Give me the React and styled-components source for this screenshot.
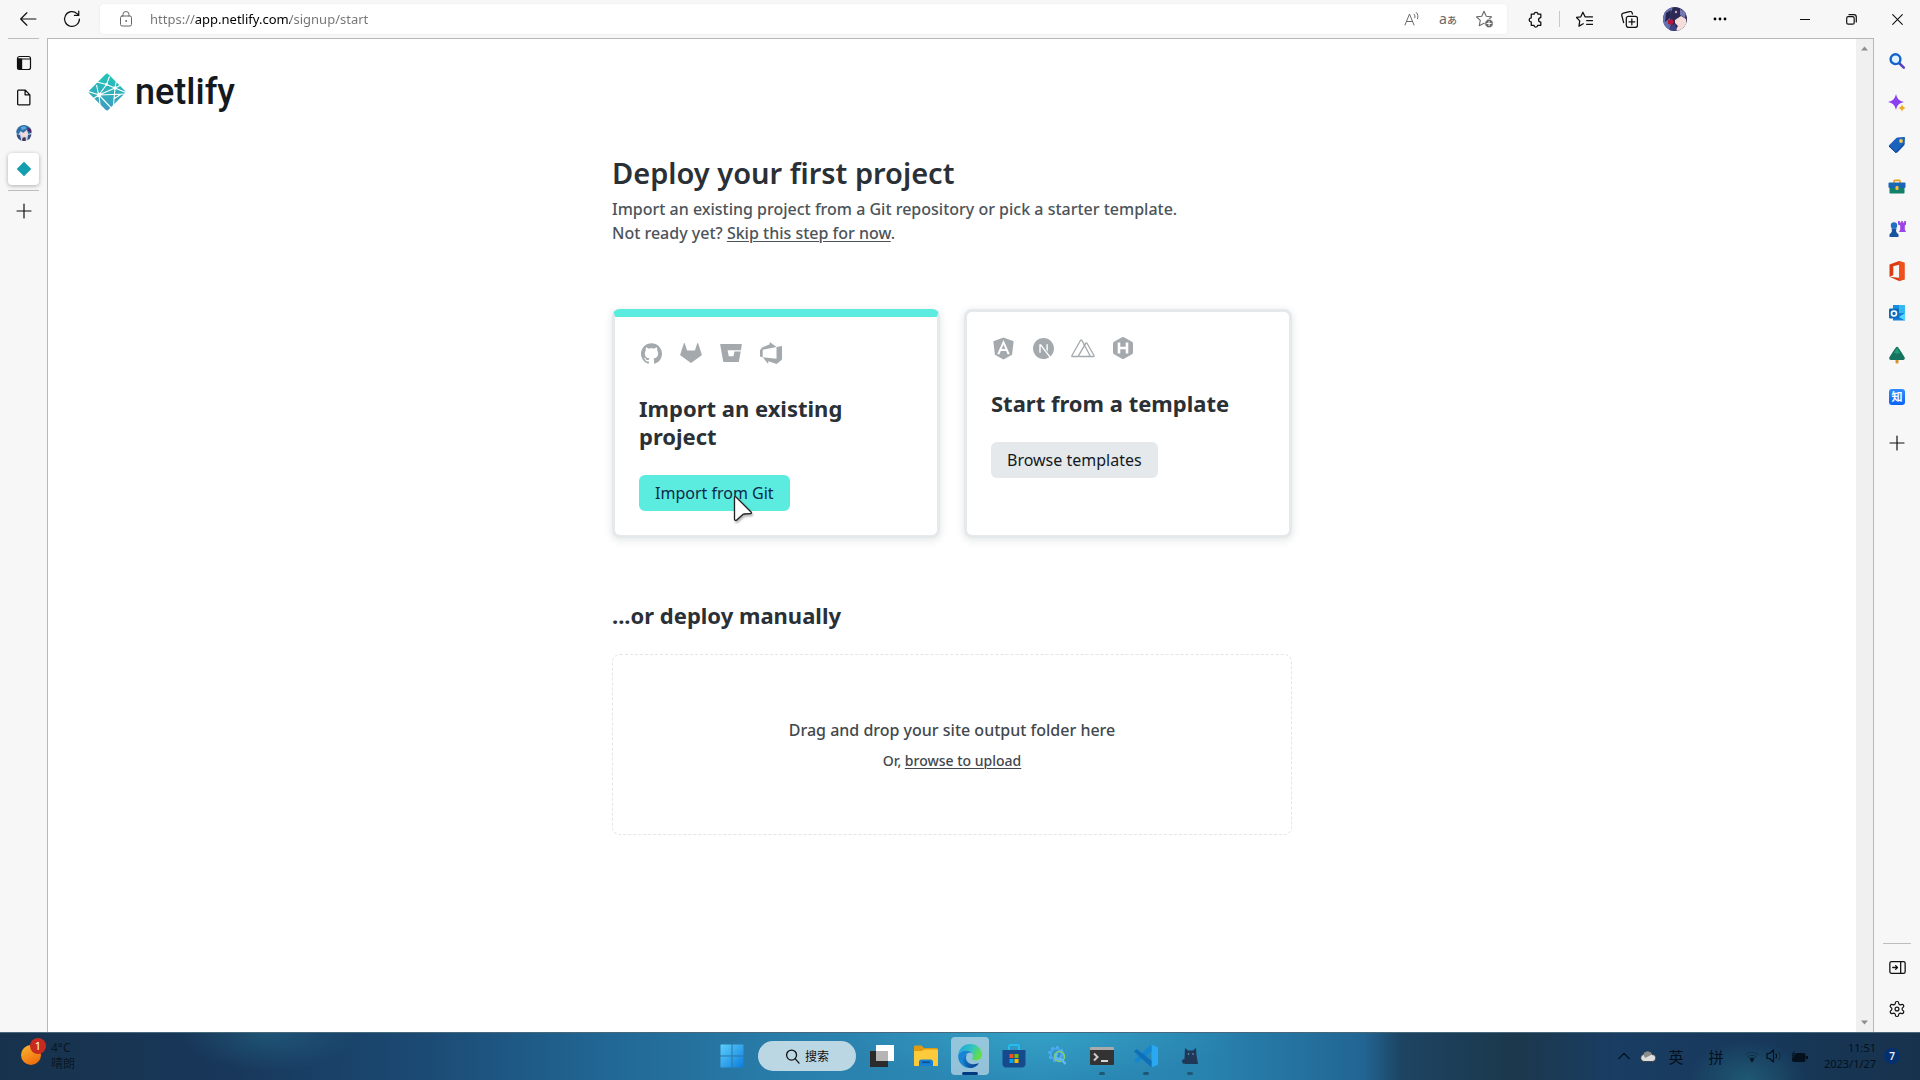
import React from 'react';
import styled, { createGlobalStyle, css } from 'styled-components';
import { SiGithub, SiNextdotjs } from 'react-icons/si';
import { FaAngular } from 'react-icons/fa';

const GlobalStyle = createGlobalStyle`
  *, *::before, *::after { box-sizing: border-box; }
  body { margin: 0; background: #f7f7f7; overflow: hidden; }
  body, button, input { font-family: "Noto Sans", "Noto Sans CJK SC", sans-serif; }
  h1, h2, p { margin: 0; }
  svg { display: block; flex: none; }
`;

/* ---------- window frame ---------- */

const Screen = styled.div`
  display: grid;
  grid-template-rows: 38px 1fr 48px;
  min-height: 100vh;
`;

const PlainButton = styled.button`
  display: flex;
  align-items: center;
  justify-content: center;
  padding: 0;
  border: 0;
  background: none;
  color: #111;
`;

const Toolbar = styled.header`
  display: flex;
  align-items: center;
  padding-left: 10px;
  background: #f7f7f7;
`;

const ToolButton = styled(PlainButton)`
  width: ${(p) => p.$width || 45}px;
  height: 36px;
`;

const NavGroup = styled.div`
  display: flex;
  width: 90px;
`;

const AddressBar = styled.div`
  flex: 1;
  display: flex;
  align-items: center;
  height: 30px;
  margin-right: 6px;
  padding: 0 5px 0 18px;
  border-radius: 4px;
  background: #fff;
  box-shadow: 0 0 2px rgba(0, 0, 0, 0.08);
`;

const AddressInput = styled.input`
  flex: 1;
  min-width: 0;
  height: 24px;
  margin-left: 16px;
  padding: 0;
  border: 0;
  outline: 0;
  font-size: 13px;
  background: linear-gradient(90deg, #737373 45px, #000 45px 140px, #737373 140px);
  -webkit-background-clip: text;
  background-clip: text;
  -webkit-text-fill-color: transparent;
`;

const AddressAction = styled(PlainButton)`
  width: 36px;
  height: 24px;
  color: #6a6a6a;
`;

const Translate = styled.span`
  font-size: 14px;
  line-height: 16px;
  small { font-size: 10px; font-weight: 500; }
`;

const ToolDivider = styled.span`
  width: 1px;
  height: 16px;
  margin: 0 2px 0 1px;
  background: #c8c8c8;
`;

const WindowControls = styled.div`
  display: flex;
  margin-left: 40px;
`;

const Body = styled.div`
  display: flex;
  min-height: 0;
`;

const TabRail = styled.nav`
  display: flex;
  flex-direction: column;
  align-items: center;
  width: 47px;
  background: #f7f7f7;
`;

const RailDivider = styled.span`
  width: ${(p) => p.$width}px;
  height: 1px;
  background: #bdbdbd;
`;

const TabList = styled.div`
  display: flex;
  flex-direction: column;
  gap: 4px;
  margin-bottom: 5px;
`;

const Tab = styled(PlainButton)`
  width: 31px;
  height: 32px;
  border-radius: 4px;
  ${(p) => p.$active && css`
    background: #fff;
    box-shadow: 0 1px 4px rgba(0, 0, 0, 0.3);
  `}
`;

const PanelToggle = styled(Tab)`
  margin: 8px 0 2px;
`;

const NewTab = styled(Tab)`
  margin-top: 4px;
`;

const Viewport = styled.main`
  flex: 1;
  min-width: 0;
  border: 1px solid #b8b8b8;
  border-width: 1px 0 0 1px;
  background: #fff;
`;

const ScrollTrack = styled.div`
  display: flex;
  flex-direction: column;
  align-items: center;
  justify-content: space-between;
  width: 18px;
  padding: 7px 0;
  border: 1px solid #b8b8b8;
  border-width: 1px 1px 0 0;
  background: #f0f0f0;
`;

const SideRail = styled.aside`
  display: flex;
  flex-direction: column;
  align-items: center;
  width: 46px;
  padding: 2px 0;
  background: #f7f7f7;
`;

const SideButton = styled(PlainButton)`
  width: 42px;
  height: 42px;
`;

const SideAdd = styled(SideButton)`
  margin-top: 4px;
`;

const SideFooter = styled.div`
  display: flex;
  flex-direction: column;
  align-items: center;
  margin-top: auto;
  ${RailDivider} { margin-bottom: 2px; }
`;

const ZhihuBadge = styled.span`
  width: 16px;
  border-radius: 3px;
  background: linear-gradient(#2f8dff, #0a62f5);
  color: #fff;
  font-size: 11px;
  font-weight: 700;
  line-height: 16px;
  text-align: center;
`;

/* ---------- page ---------- */

const SiteHeader = styled.div`
  padding: 32px 40px 0;
`;

const Brand = styled.a`
  display: inline-flex;
  align-items: center;
  gap: 9px;
  height: 42px;
  color: #14191d;
  font: 500 36px/42px Roboto, sans-serif;
  text-decoration: none;
  vertical-align: top;
`;

const Column = styled.div`
  width: 100%;
  max-width: 680px;
  margin: 42px auto 0;
`;

const Title = styled.h1`
  color: #2a3036;
  font-size: 29px;
  font-weight: 600;
  line-height: 36px;
`;

const Intro = styled.p`
  margin-top: 6px;
  color: #4c5459;
  font-size: 16px;
  font-weight: 500;
  line-height: 24px;
`;

const TextLink = styled.a`
  color: inherit;
  text-decoration: underline;
  text-decoration-thickness: 1px;
  text-underline-offset: 2px;
`;

const Cards = styled.div`
  display: grid;
  grid-template-columns: 1fr 1fr;
  gap: 24px;
  margin-top: 64px;
`;

const Card = styled.section`
  padding: 24px;
  border: 3px solid #e5e9ec;
  ${(p) => p.$featured && css`border-top: 8px solid #5cebdf;`}
  border-radius: 8px;
  background: #fff;
  box-shadow: 0 2px 8px rgba(14, 30, 37, 0.12);
`;

const LogoRow = styled.div`
  display: flex;
  gap: 16px;
  color: #a3a9ac;
`;

const LogoBox = styled.span`
  display: flex;
  align-items: center;
  justify-content: center;
  width: 24px;
  height: 24px;
`;

const Subtitle = styled.h2`
  color: #2a3036;
  font-size: 22px;
  font-weight: 700;
  line-height: 28px;
`;

const CardTitle = styled(Subtitle)`
  margin: 29px 0 25px;
`;

const ActionButton = styled.button`
  position: relative;
  height: 36px;
  padding: 0 16px;
  border: 0;
  border-radius: 6px;
  background: ${(p) => (p.$primary ? '#5cebdf' : '#e5e9ec')};
  color: ${(p) => (p.$primary ? '#0c2a4a' : '#14191d')};
  font-size: 16px;
  font-weight: 400;
  line-height: 24px;
`;

const Pointer = styled.svg`
  position: absolute;
  left: 94px;
  top: 20px;
  z-index: 1;
  filter: drop-shadow(1px 2px 1px rgba(0, 0, 0, 0.3));
`;

const Manual = styled.section`
  margin-top: 63px;
`;

const DropZone = styled.div`
  margin-top: 25px;
  padding: 63px 24px;
  border: 1px dashed #e3e5e7;
  border-radius: 8px;
  color: #42484d;
  text-align: center;
`;

const DropText = styled.p`
  font-size: 16px;
  font-weight: 500;
  line-height: 24px;
`;

const DropHint = styled.p`
  margin-top: 9px;
  font-size: 14px;
  font-weight: 500;
  line-height: 20px;
`;

/* ---------- taskbar ---------- */

const Taskbar = styled.footer`
  display: grid;
  grid-template-columns: 1fr auto 1fr;
  align-items: center;
  padding-left: 2px;
  box-shadow: inset 0 1px #48697c;
  background:
    radial-gradient(ellipse 60px 40px at 91% 100%, rgba(36, 110, 130, 0.6), transparent),
    radial-gradient(ellipse 90px 40px at 14% 0%, rgba(36, 110, 140, 0.5), transparent),
    radial-gradient(ellipse 200px 50px at 54% 0%, rgba(60, 180, 210, 0.5), transparent),
    linear-gradient(90deg, #17324c 0%, #18375a 12%, #1b4a74 22%, #226896 32%, #2a80ac 42%,
      #2c8cb8 54%, #2882ae 63%, #226594 71%, #1d4462 73%, #1b384c 79%, #193d63 84%, #17385a 92%, #17324c 100%);
`;

const Weather = styled(PlainButton)`
  justify-self: start;
  gap: 5px;
  margin-left: 18px;
  color: #0b1722;
  font-size: 12px;
  line-height: 16px;
  text-align: left;
`;

const Stack = styled.span`
  display: flex;
  flex-direction: column;
`;

const Dock = styled.div`
  display: flex;
  align-items: center;
`;

const DockItem = styled(PlainButton)`
  position: relative;
  width: 38px;
  height: 38px;
  margin: 0 3px;
  border-radius: 4px;
  background: ${(p) => (p.$active ? 'rgba(216, 230, 238, 0.6)' : 'none')};
  ${(p) => (p.$active || p.$running) && css`
    &::after {
      content: '';
      position: absolute;
      bottom: 0;
      width: ${p.$active ? 16 : 6}px;
      height: 3px;
      border-radius: 2px;
      background: ${p.$active ? '#003a80' : '#1d5876'};
    }
  `}
`;

const SearchPill = styled(PlainButton)`
  gap: 5px;
  width: 98px;
  height: 30px;
  margin: 0 4px;
  border-radius: 15px;
  background: #bcd7e4;
  font-size: 12px;
`;

const Tray = styled.div`
  display: flex;
  align-items: center;
  justify-self: end;
  margin-right: 20px;
`;

const TrayButton = styled(PlainButton)`
  width: ${(p) => p.$width || 24}px;
  height: 40px;
  color: #04101c;
  font-size: 15px;
`;

const Clock = styled(TrayButton)`
  margin-left: 9px;
  font-size: 11px;
  line-height: 16px;
  text-align: right;
`;

const NoticeCount = styled.span`
  width: 16px;
  margin-left: 7px;
  border-radius: 50%;
  background: #043070;
  color: #e8f0fa;
  font-size: 10px;
  font-weight: 600;
  line-height: 16px;
  text-align: center;
`;

/* ---------- icons ---------- */

const Line = ({ size = 16, w = 1.2, children, box = 16 }) => (
  <svg width={size} height={size} viewBox={`0 0 ${box} ${box}`} fill="none" stroke="currentColor"
    strokeWidth={w} strokeLinecap="round" strokeLinejoin="round">{children}</svg>
);

const STAR = 'M8 1.2l2 4.3 4.7.6-3.4 3.2.9 4.7L8 11.8 3.8 14l.9-4.7L1.3 6.1 6 5.5z';

const NetlifyMark = () => (
  <svg width="38" height="38" viewBox="0 0 38 38">
    <defs>
      <linearGradient id="nl" x1="0" y1="0" x2="1" y2="1">
        <stop offset="0" stopColor="#20c6b7" /><stop offset="1" stopColor="#3e9bc0" />
      </linearGradient>
    </defs>
    <rect x="5.500" y="5.500" width="27" height="27" rx="2" transform="rotate(45 19 19)" fill="url(#nl)" />
    <g stroke="#fff" strokeWidth="1.100" fill="none">
      <path d="M9 9l9.500 2.500M18.500 11.500l3-8M18.500 11.500L27 15M18.500 11.500L11 22M27 15l1.500-8M27 15l12 5M11 22L-1 18M11 22L3 27M11 22l16-7M11 22l28-1M11 22l15 16M11 22l1 10M27 15l-2 23M25.500 26l8-5M10.500 21L8.500 12M27 15l6-3" />
    </g>
    <circle cx="11" cy="22" r="2.200" fill="#fff" />
    <circle cx="27" cy="15" r="1.700" fill="#fff" />
    <circle cx="18.500" cy="11.500" r="1.400" fill="#fff" />
  </svg>
);

const Gitlab = () => (
  <svg width="24" height="24" viewBox="0 0 24 24" fill="currentColor">
    <path d="M12 22L1.600 14.400a1 1 0 0 1-.3-1.100L2.500 9.600 4.900 2.200c.15-.4.7-.4.8 0L8.100 9.500h7.800l2.400-7.300c.15-.4.7-.4.8 0l2.400 7.400 1.200 3.700a1 1 0 0 1-.3 1.100z" />
  </svg>
);

const Bitbucket = () => (
  <svg width="24" height="24" viewBox="0 0 24 24" fill="currentColor">
    <path d="M1.700 3h20.600c.4 0 .6.3.5.7L21.900 9.200H8.600l1.200 6h4.700l.9-4.700h6.300L19.900 20.400c-.1.4-.3.6-.7.6H4.900c-.4 0-.7-.3-.7-.6L1.200 3.700c-.1-.4.1-.7.5-.7z" />
  </svg>
);

const AzureDevops = () => (
  <svg width="22" height="22" viewBox="0 0 24 24" fill="currentColor">
    <path d="M0 8.877L2.247 5.910l8.405-3.416V.022l7.370 5.393L2.966 8.338v8.225L0 15.707zm24-4.450v14.651l-5.753 4.900-9.303-3.057v3.056l-5.978-7.416 15.057 1.798V5.415z" />
  </svg>
);

const Nuxt = () => (
  <svg width="24" height="24" viewBox="0 0 24 24" fill="none" stroke="currentColor" strokeWidth="1.300" strokeLinejoin="round">
    <path d="M7.500 20.500H1.300c-.5 0-.7-.5-.4-1L9.600 4.200c.3-.5.8-.5 1.100 0l3.200 5.600" />
    <path d="M8.500 20.500c-.9 0-1.100-.6-.8-1.200L14.900 7.200c.3-.5.8-.5 1.100 0l7 12.300c.3.500.1 1-.5 1z" />
    <path d="M12.600 7.800l6 10.900c.5 1 .2 1.800-.9 1.800" />
  </svg>
);

const Hugo = () => (
  <svg width="24" height="24" viewBox="0 0 24 24">
    <path d="M11 1.300a2 2 0 0 1 2 0l8 4.500c.6.400 1 1 1 1.700v9c0 .7-.4 1.300-1 1.700l-8 4.500a2 2 0 0 1-2 0l-8-4.500c-.6-.4-1-1-1-1.700v-9c0-.7.4-1.300 1-1.700z" fill="currentColor" />
    <path d="M8 6.500v11M16 6.500v11M8 12h8" stroke="#fff" strokeWidth="2.600" />
  </svg>
);

const Gear = () => (
  <Line size={18} box={24} w={1.6}>
    <path d="M12.220 2h-.440a2 2 0 0 0-2 2v.180a2 2 0 0 1-1 1.730l-.430.250a2 2 0 0 1-2 0l-.150-.080a2 2 0 0 0-2.730.730l-.220.380a2 2 0 0 0 .730 2.730l.150.100a2 2 0 0 1 1 1.720v.510a2 2 0 0 1-1 1.740l-.150.090a2 2 0 0 0-.730 2.730l.220.380a2 2 0 0 0 2.730.730l.150-.080a2 2 0 0 1 2 0l.430.250a2 2 0 0 1 1 1.730V20a2 2 0 0 0 2 2h.440a2 2 0 0 0 2-2v-.180a2 2 0 0 1 1-1.730l.430-.250a2 2 0 0 1 2 0l.150.080a2 2 0 0 0 2.730-.730l.220-.390a2 2 0 0 0-.730-2.730l-.150-.080a2 2 0 0 1-1-1.740v-.500a2 2 0 0 1 1-1.740l.150-.090a2 2 0 0 0 .730-2.730l-.220-.380a2 2 0 0 0-2.730-.730l-.150.080a2 2 0 0 1-2 0l-.430-.250a2 2 0 0 1-1-1.730V4a2 2 0 0 0-2-2z" />
    <circle cx="12" cy="12" r="2.600" />
  </Line>
);

const Plus = () => <Line w={1.200}><path d="M8 1v14M1 8h14" /></Line>;

const SideSearch = () => (
  <svg width="18" height="18" viewBox="0 0 18 18" fill="none">
    <path d="M10.800 10.800l5 4.800" stroke="#5b3fc4" strokeWidth="2.600" strokeLinecap="round" />
    <circle cx="7.500" cy="7.200" r="4.900" fill="#dff2ff" stroke="#1463c8" strokeWidth="2.400" />
  </svg>
);
const Sparkle = () => (
  <svg width="18" height="18" viewBox="0 0 18 18">
    <path d="M8 0c1.300 5 3 6.700 8 8-5 1.300-6.700 3-8 8-1.300-5-3-6.700-8-8 5-1.300 6.700-3 8-8z" fill="#8b3df0" />
    <path d="M14 10c.6 2.600 1.400 3.400 4 4-2.600.6-3.400 1.400-4 4-.6-2.600-1.400-3.400-4-4 2.600-.6 3.400-1.400 4-4z" fill="#f2a81d" />
  </svg>
);
const Tag = () => (
  <svg width="18" height="18" viewBox="0 0 18 18">
    <path d="M9.500 1.500L16 1c.7 0 1 .3 1 1l-.4 6.300c0 .5-.2.800-.5 1.100l-6.700 7c-.6.600-1.300.6-1.900 0L1.300 11c-.6-.6-.6-1.400 0-2l7-7c.3-.3.700-.5 1.200-.5z" fill="#1b62bd" />
    <path d="M1 10l6.800 6.600 8.500-9" stroke="#10438c" fill="none" />
    <circle cx="13" cy="5" r="1.900" fill="#f7c948" />
  </svg>
);
const Toolbox = () => (
  <svg width="18" height="18" viewBox="0 0 18 18">
    <path d="M6 5V3.200c0-.5.300-.8.800-.8h4.400c.5 0 .8.300.8.800V5" fill="none" stroke="#e4a11b" strokeWidth="1.600" />
    <rect x=".5" y="4.500" width="17" height="5.500" rx="1" fill="#1767b5" />
    <path d="M1.500 10h15v4.500c0 .6-.4 1-1 1h-13c-.6 0-1-.4-1-1z" fill="#12806a" />
    <rect x="7.500" y="8" width="3" height="4" rx="1" fill="#f5c037" />
  </svg>
);
const Chess = () => (
  <svg width="18" height="18" viewBox="0 0 18 18">
    <path d="M10 1h1.800v1.500h1.400V1h1.600v1.500h1.400V1H18v3.500l-1.200 1v4L18 12h-7l1.200-2.500v-4L10 4.500z" fill="#9b45e8" />
    <circle cx="6" cy="5.500" r="3.200" fill="#2070c8" />
    <path d="M3.500 8.500h5v1.200H8c0 2 .6 3.300 2.500 4.500V17h-9v-2.800c1.900-1.200 2.500-2.500 2.500-4.500h-.5z" fill="#17559f" />
  </svg>
);
const Office = () => (
  <svg width="18" height="20" viewBox="0 0 18 20">
    <path d="M11 0L1.500 3.600v12.200l3.800-1.500V5.200L11 3.800v13L1.500 15.800 11 20l5.500-1.600V1.700z" fill="#dc3c12" />
    <path d="M11 0l5.500 1.700v16.700L11 20z" fill="#f0501c" />
  </svg>
);
const Outlook = () => (
  <svg width="18" height="18" viewBox="0 0 18 18">
    <rect x="5" y="1" width="12" height="12" fill="#35b8f1" />
    <rect x="5" y="1" width="6" height="6" fill="#1490df" />
    <path d="M5 9h12v7.500H5z" fill="#1480d8" /><path d="M17 9l-6 4 6 3.500z" fill="#50d9ff" />
    <rect x="1" y="4.500" width="10" height="10" rx="1" fill="#0f6cbd" />
    <circle cx="6" cy="9.500" r="2.500" fill="none" stroke="#fff" strokeWidth="1.600" />
  </svg>
);
const Tree = () => (
  <svg width="18" height="18" viewBox="0 0 18 18">
    <rect x="7.500" y="12" width="3" height="5.500" rx="1" fill="#d9912a" />
    <path d="M9 .8c.6 0 .9.300 1.200.8l2.600 3.700 3.800 6c.6 1.300 0 2.700-1.500 2.700H2.900c-1.500 0-2.100-1.400-1.500-2.700l3.800-6 2.600-3.700c.3-.5.600-.8 1.200-.8z" fill="#16735f" />
    <path d="M9 2l3 4.500-3 1.500-3-1.500z" fill="#239b78" />
  </svg>
);

const MikuAvatar = () => (
  <svg width="16" height="16" viewBox="0 0 24 24">
    <defs><clipPath id="miku"><circle cx="12" cy="12" r="12" /></clipPath></defs>
    <g clipPath="url(#miku)">
      <rect width="24" height="24" fill="#c9d3e6" />
      <path d="M0 10C2 2 7 0 12 0s11 3 12 11l-5 3-3-7-5 5-4-3-4 6z" fill="#2f6fa8" />
      <path d="M7 3l6-1 3 3-7 3z" fill="#5fa8d8" />
      <path d="M17 4l6 2-1 6-4-3z" fill="#4b2a66" />
      <path d="M7 11l4 1 5-3 2 6-5 4-5-3z" fill="#f3d9d6" />
      <path d="M1 14l5 1 2 9H3zM18 15l5-1-2 8-4 2z" fill="#35507e" />
      <path d="M10 19l4-1 1 6H9z" fill="#3b3350" />
    </g>
  </svg>
);

const ProfileAvatar = () => (
  <svg width="24" height="24" viewBox="0 0 24 24">
    <defs><clipPath id="profile"><circle cx="12" cy="12" r="12" /></clipPath></defs>
    <g clipPath="url(#profile)">
      <rect width="24" height="24" fill="#2c2a55" />
      <path d="M0 0h10L7 8l1 16H0z" fill="#6672ae" />
      <path d="M3 6l5-3-1 8-5 4z" fill="#262450" />
      <path d="M17 2l6 3-1 6-5-3z" fill="#7478b2" />
      <path d="M12 13l6-4 5 3 1 12H12l3-5-3-3z" fill="#f5ddd9" />
      <path d="M5 13l4-1 2 3-2 3-4-1z" fill="#b3173c" />
      <path d="M7 19l5-2 2 7H6z" fill="#3e4284" />
      <circle cx="13" cy="5" r="1.200" fill="#c7a3bd" />
    </g>
  </svg>
);

const EdgeLogo = () => (
  <svg width="24" height="24" viewBox="0 0 24 24">
    <defs>
      <linearGradient id="e1" x1="0" y1="0" x2="1" y2=".4"><stop offset="0" stopColor="#1b9de2" /><stop offset=".6" stopColor="#32c6c0" /><stop offset="1" stopColor="#63dd48" /></linearGradient>
      <linearGradient id="e2" x1="0" y1="0" x2="1" y2="1"><stop offset="0" stopColor="#1786d8" /><stop offset="1" stopColor="#0b3c86" /></linearGradient>
    </defs>
    <path d="M.2 11C.8 4.600 5.900 0 12 0c7 0 12 5 12 10.300 0 3.700-2.700 6-6 6-2.400 0-4-.8-4-1.800 0-.7 1-1.100 1-2.800C15 8.800 12 6.500 8.500 6.500 4.500 6.500 1.500 8.500.2 11z" fill="url(#e1)" />
    <path d="M.2 11C1.500 8.500 4.500 6.500 8.500 6.500c2.600 0 4.900 1.300 5.900 3.200-.8-.6-1.600-.9-2.400-.9-3.500 0-5.700 3-5.200 6.300.6 4.200 4.500 6.800 8.700 6.400 2-.2 3.800-1 5.500-2.200C18.800 22.300 15.600 24 12 24 5 24-.3 18 .2 11z" fill="#1a84d4" />
    <path d="M9.500 10.200c-3 3-1.300 8.500 4 9.800 2.700.6 5.500-.3 7.500-.7C18.800 22.300 15.600 24 12 24c-4.500-1.200-7-4.400-7-8.300 0-2.500 2-4.700 4.500-5.500z" fill="url(#e2)" />
  </svg>
);

const dock = [
  { name: 'Task view', icon: (
    <svg width="24" height="24" viewBox="0 0 24 24"><rect x="6" y="1" width="18" height="16" fill="#fff" /><rect y="7" width="18" height="16" fill="#2b2b2b" /><rect x="6" y="7" width="12" height="10" fill="#b5b5b5" /></svg>) },
  { name: 'File Explorer', icon: (
    <svg width="24" height="24" viewBox="0 0 24 24"><path d="M0 3c0-1 .5-1.500 1.500-1.500h6L10 4h12.500c1 0 1.500.5 1.500 1.500V10H0z" fill="#e09c10" /><path d="M0 7h8l2-1.500h12.500c1 0 1.500.5 1.500 1.500v14c0 .6-.4 1-1 1H1c-.6 0-1-.4-1-1z" fill="#fdca3c" /><path d="M5 22v-4c0-1.500.8-2.500 2.500-2.500h9c1.700 0 2.500 1 2.500 2.500v4z" fill="#1681d2" /><rect x="8" y="17.500" width="8" height="1.600" fill="#0b4f94" /></svg>) },
  { name: 'Edge', active: true, icon: <EdgeLogo /> },
  { name: 'Store', icon: (
    <svg width="24" height="24" viewBox="0 0 24 24"><path d="M7 6V2.500C7 1.600 7.600 1 8.500 1h7c.9 0 1.500.6 1.500 1.500V6" fill="none" stroke="#25bdf0" strokeWidth="2" /><path d="M.5 6h23v14c0 2-1.500 3.500-3.500 3.500H4C2 23.500.5 22 .5 20z" fill="#174a8c" /><path d="M7.500 10h4v4h-4z" fill="#f25022" /><path d="M12.500 10h4v4h-4z" fill="#7fba00" /><path d="M7.500 15h4v4h-4z" fill="#00a4ef" /><path d="M12.500 15h4v4h-4z" fill="#ffb900" /></svg>) },
  { name: 'Tools', icon: (
    <svg width="20" height="20" viewBox="0 0 20 20" fill="none"><circle cx="8" cy="8" r="6.700" stroke="#52aef2" strokeWidth="2.400" strokeDasharray="2.800 2.460" /><circle cx="8" cy="8" r="5.400" stroke="#4ba6f0" strokeWidth="2" /><circle cx="11.500" cy="10.500" r="5" stroke="#8ccf6a" strokeWidth="1.400" /><path d="M9.500 7.500a3 3 0 1 0 4 4M13 13l4.500 5" stroke="#63b9f5" strokeWidth="2.400" /></svg>) },
  { name: 'Terminal', running: true, icon: (
    <svg width="24" height="20" viewBox="0 0 24 20"><rect y="1" width="24" height="18" rx="1" fill="#333" /><path d="M0 4V2c0-.6.4-1 1-1h22c.6 0 1 .4 1 1v2z" fill="#aaa" /><path d="M4 7.500l3.500 3.500L4 14.500" stroke="#ccc" strokeWidth="2" fill="none" /><path d="M11 15h7" stroke="#fff" strokeWidth="1.600" /></svg>) },
  { name: 'VS Code', running: true, icon: (
    <svg width="24" height="24" viewBox="0 0 24 24"><path d="M17.500.5L24 3.500v17l-6.500 3z" fill="#2aa8f2" /><path d="M17.500.5L.5 16c-.4.400-.4.800 0 1.200L2 18.500c.4.300.8.300 1.200 0L17.500 7.500z" fill="#1685d0" /><path d="M17.500 23.500L.5 8c-.4-.4-.4-.8 0-1.200L2 5.500c.4-.3.800-.3 1.200 0l14.300 11z" fill="#0f6fb8" /></svg>) },
  { name: 'Clash', running: true, icon: (
    <svg width="18" height="18" viewBox="0 0 18 18"><path d="M4 1l3 2.500h5L15 1l.5 7 1.500 9H5c-2.500 0-4-.8-4-2.500S2 12 3.500 12z" fill="#203858" /><circle cx="7.500" cy="7" r=".8" fill="#7ea7c6" /><circle cx="12" cy="7" r=".8" fill="#7ea7c6" /></svg>) },
];

const sideApps = [
  ['Search', <SideSearch />], ['Discover', <Sparkle />], ['Shopping', <Tag />], ['Tools', <Toolbox />],
  ['Games', <Chess />], ['Office', <Office />], ['Outlook', <Outlook />], ['Tree', <Tree />],
  ['Zhihu', <ZhihuBadge>知</ZhihuBadge>],
];

const gitLogos = [<SiGithub size={21} />, <Gitlab />, <Bitbucket />, <AzureDevops />];
const templateLogos = [<FaAngular size={25} />, <SiNextdotjs size={21} />, <Nuxt />, <Hugo />];

const Logos = ({ items }) => (
  <LogoRow>{items.map((icon, i) => <LogoBox key={i}>{icon}</LogoBox>)}</LogoRow>
);

export default function App() {
  return (
    <Screen>
      <GlobalStyle />
      <Toolbar>
        <NavGroup>
          <ToolButton $width={36} aria-label="Back"><Line size={18}><path d="M15 8H1.500M7 2.500L1.500 8 7 13.500" strokeWidth="1.100" /></Line></ToolButton>
          <ToolButton $width={52} aria-label="Refresh"><Line size={18}><path d="M14.600 8A6.600 6.600 0 1 1 12.500 3.200L14 4.700M14 1v3.800h-3.800" strokeWidth="1.100" /></Line></ToolButton>
        </NavGroup>
        <AddressBar>
          <Line size={16} w={1}><rect x="2.500" y="5" width="11" height="10" rx="1.500" stroke="#666" /><path d="M5 5V3.500a3 3 0 0 1 6 0V5" stroke="#666" /><circle cx="8" cy="10" r=".5" stroke="#666" /></Line>
          <AddressInput aria-label="Address" defaultValue="https://app.netlify.com/signup/start" />
          <AddressAction aria-label="Read aloud"><Line size={16} w={1}><path d="M1 14L5.500 3 10 14M2.600 10.500h5.800M10 3.200c1 1 1.200 2.300.8 3.600M12.300 1.500c1.700 1.700 2 4 1.200 6.300" /></Line></AddressAction>
          <AddressAction aria-label="Translate"><Translate>a<small>あ</small></Translate></AddressAction>
          <AddressAction aria-label="Add to favorites"><Line size={18} w={1}><path d={STAR} /><circle cx="12.500" cy="12" r="3.800" fill="#6a6a6a" stroke="#fff" strokeWidth=".6" /><path d="M12.500 10.200v3.600M10.700 12h3.600" stroke="#fff" /></Line></AddressAction>
        </AddressBar>
        <ToolButton aria-label="Extensions"><Line size={17} w={1.200}><path d="M4 3h2.700a1.800 1.800 0 0 1 3.600 0H13v3.200a1.500 1.500 0 0 0 0 4.200V13.500h-3a1.700 1.700 0 0 1-3.400 0H4v-3.200a1.900 1.900 0 1 1 0-3.800z" /></Line></ToolButton>
        <ToolDivider />
        <ToolButton aria-label="Favorites"><Line size={17} w={1.200}><path d="M9.500 5.500h-1L6.500 1.200l-2 4.300-4 .6 3 3.200-.7 4.900 4-2.200M10 5.500h5.500M10 9h5.500M10 12.500h5.500" /></Line></ToolButton>
        <ToolButton aria-label="Collections"><Line size={17} w={1.200}><rect x="5" y="5" width="10.500" height="10.500" rx="2" /><path d="M10.200 7.500v5.500M7.500 10.200H13M2.500 11L.8 4.500C.5 3.300 1 2.300 2.200 2l6-1.500c1.200-.2 2 .3 2.300 1.300l.3 1" /></Line></ToolButton>
        <ToolButton aria-label="Profile"><ProfileAvatar /></ToolButton>
        <ToolButton aria-label="More"><svg width="14" height="4" viewBox="0 0 14 4"><circle cx="2" cy="2" r="1.400" /><circle cx="7" cy="2" r="1.400" /><circle cx="12" cy="2" r="1.400" /></svg></ToolButton>
        <WindowControls>
          <ToolButton $width={46} aria-label="Minimize"><Line size={10} box={10} w={1}><path d="M0 5.500h10" /></Line></ToolButton>
          <ToolButton $width={46} aria-label="Restore"><Line size={11} box={11} w={1.200}><rect x=".7" y="2.700" width="7.500" height="7.500" rx="1.500" /><path d="M3 .7h5a2.300 2.300 0 0 1 2.300 2.300v5" /></Line></ToolButton>
          <ToolButton $width={46} aria-label="Close"><Line size={11} box={11} w={1.100}><path d="M.7.7l9.600 9.600M10.300.7L.7 10.300" /></Line></ToolButton>
        </WindowControls>
      </Toolbar>

      <Body>
        <TabRail>
          <RailDivider $width={31} />
          <PanelToggle aria-label="Tab pane"><Line size={16} w={1.200}><rect x="1.500" y="1.500" width="13" height="13" rx="2" /><path d="M2 4h12M5.500 4v10.500" /><path d="M2 4h3.500v10H2z" fill="currentColor" /></Line></PanelToggle>
          <TabList>
            <Tab aria-label="New tab page"><Line size={17} w={1.200}><path d="M3 1h6.500L14 5.500V14c0 .600-.400 1-1 1H3.500c-.600 0-1-.400-1-1V1.500M9.500 1v4.500H14" /></Line></Tab>
            <Tab aria-label="Profile page"><MikuAvatar /></Tab>
            <Tab $active aria-label="Netlify"><svg width="16" height="16" viewBox="0 0 16 16"><rect x="2.800" y="2.800" width="10.400" height="10.400" rx=".8" transform="rotate(45 8 8)" fill="#149eaf" /></svg></Tab>
          </TabList>
          <RailDivider $width={31} />
          <NewTab aria-label="New tab"><Plus /></NewTab>
        </TabRail>

        <Viewport>
          <SiteHeader>
            <Brand href="#"><NetlifyMark />netlify</Brand>
          </SiteHeader>
          <Column>
            <Title>Deploy your first project</Title>
            <Intro>
              Import an existing project from a Git repository or pick a starter template.<br />
              Not ready yet? <TextLink href="#">Skip this step for now</TextLink>.
            </Intro>
            <Cards>
              <Card $featured>
                <Logos items={gitLogos} />
                <CardTitle>Import an existing project</CardTitle>
                <ActionButton $primary>
                  Import from Git
                  <Pointer width="22" height="28" viewBox="0 0 22 28"><path d="M1.500 2.500c0-1 .9-1.200 1.500-.5L18 17c.7.800.3 1.700-.7 1.700l-6.300.3c-.6 0-1 .2-1.400.7l-5.900 5.300c-.8.700-2.200.3-2.200-.8z" fill="#fff" stroke="#222" strokeWidth="1.300" /></Pointer>
                </ActionButton>
              </Card>
              <Card>
                <Logos items={templateLogos} />
                <CardTitle>Start from a template</CardTitle>
                <ActionButton>Browse templates</ActionButton>
              </Card>
            </Cards>
            <Manual>
              <Subtitle>...or deploy manually</Subtitle>
              <DropZone>
                <DropText>Drag and drop your site output folder here</DropText>
                <DropHint>Or, <TextLink href="#">browse to upload</TextLink></DropHint>
              </DropZone>
            </Manual>
          </Column>
        </Viewport>
        <ScrollTrack>
          <svg width="7" height="5" viewBox="0 0 7 5"><path d="M0 4.500L3.500 .5 7 4.500z" fill="#8d8d8d" /></svg>
          <svg width="7" height="5" viewBox="0 0 7 5"><path d="M0 .5L3.500 4.500 7 .5z" fill="#8d8d8d" /></svg>
        </ScrollTrack>

        <SideRail>
          {sideApps.map(([name, icon]) => <SideButton key={name} aria-label={name}>{icon}</SideButton>)}
          <SideAdd aria-label="Add"><Plus /></SideAdd>
          <SideFooter>
            <RailDivider $width={28} />
            <SideButton aria-label="Hide sidebar"><Line size={17} w={1.200}><rect x=".8" y="2.500" width="14.400" height="11" rx="1.500" /><path d="M11 2.500v11M3.500 8h4.500M6.300 6.200L8 8 6.300 9.800" /></Line></SideButton>
            <SideButton aria-label="Settings"><Gear /></SideButton>
          </SideFooter>
        </SideRail>
      </Body>

      <Taskbar>
        <Weather>
          <svg width="26" height="36" viewBox="0 0 26 36">
            <defs><linearGradient id="sun" x1="0" y1="0" x2=".6" y2="1"><stop offset="0" stopColor="#f9b934" /><stop offset="1" stopColor="#f26d0c" /></linearGradient></defs>
            <circle cx="11" cy="17" r="10" fill="url(#sun)" />
            <circle cx="18" cy="8" r="8" fill="#c72b20" />
            <text x="18" y="12" fill="#fff" fontSize="11" textAnchor="middle">1</text>
          </svg>
          <Stack><span>4°C</span><span>晴朗</span></Stack>
        </Weather>
        <Dock>
          <DockItem aria-label="Start">
            <svg width="24" height="24" viewBox="0 0 24 24"><defs><linearGradient id="win" gradientUnits="userSpaceOnUse" x1="0" y1="0" x2="24" y2="24"><stop offset="0" stopColor="#5fd0fb" /><stop offset="1" stopColor="#0a7bdc" /></linearGradient></defs><path d="M.5.5h11v11H.5zM12.500.5h11v11h-11zM.5 12.500h11v11H.5zM12.500 12.500h11v11h-11z" fill="url(#win)" /></svg>
          </DockItem>
          <SearchPill><Line size={15} w={1.400}><circle cx="7" cy="6.500" r="5.300" /><path d="M11 10.500l4 4.500" /></Line>搜索</SearchPill>
          {dock.map((d) => <DockItem key={d.name} $active={d.active} $running={d.running} aria-label={d.name}>{d.icon}</DockItem>)}
        </Dock>
        <Tray>
          <TrayButton aria-label="Hidden icons"><Line size={14} w={1.500}><path d="M2 11l6-6 6 6" /></Line></TrayButton>
          <TrayButton aria-label="OneDrive"><svg width="16" height="12" viewBox="0 0 16 12"><path d="M4 11.500a3.500 3.500 0 0 1-.6-6.900A4.600 4.600 0 0 1 12 4.500a3.500 3.500 0 0 1 .5 7z" fill="#dedede" stroke="#222" strokeWidth=".7" /><path d="M3.400 4.600A4.600 4.600 0 0 1 12 4.500L5 8z" fill="#8c8c8c" /></svg></TrayButton>
          <TrayButton $width={32}>英</TrayButton>
          <TrayButton $width={48}>拼</TrayButton>
          <TrayButton aria-label="Wi-Fi"><Line size={14} w={1.200}><path d="M1 6.500a10 10 0 0 1 14 0" opacity=".25" /><path d="M3.500 9a6.500 6.500 0 0 1 9 0" opacity=".4" /><path d="M5.500 11.500a3.600 3.600 0 0 1 5 0" /><circle cx="8" cy="13" r="1" fill="currentColor" /></Line></TrayButton>
          <TrayButton $width={20} aria-label="Volume"><Line size={16} w={1.200}><path d="M1 5.500h2.500L7.500 2v12L3.500 10.500H1z" /><path d="M10 6c.8 1.200.8 2.800 0 4" /><path d="M12.500 4c1.800 2.500 1.800 5.500 0 8" opacity=".35" /></Line></TrayButton>
          <TrayButton $width={30} aria-label="Battery"><svg width="17" height="13" viewBox="0 0 17 13"><rect x="1" y="3" width="13.500" height="9" rx="2" fill="#04101c" /><path d="M15 6h2v3h-2z" fill="#04101c" /><path d="M4 0L.5 4.500h2L1.500 8 5 3.500H3z" fill="#04101c" stroke="#17385a" strokeWidth=".5" /></svg></TrayButton>
          <Clock $width={54}><Stack><span>11:51</span><span>2023/1/27</span></Stack></Clock>
          <NoticeCount>7</NoticeCount>
        </Tray>
      </Taskbar>
    </Screen>
  );
}
